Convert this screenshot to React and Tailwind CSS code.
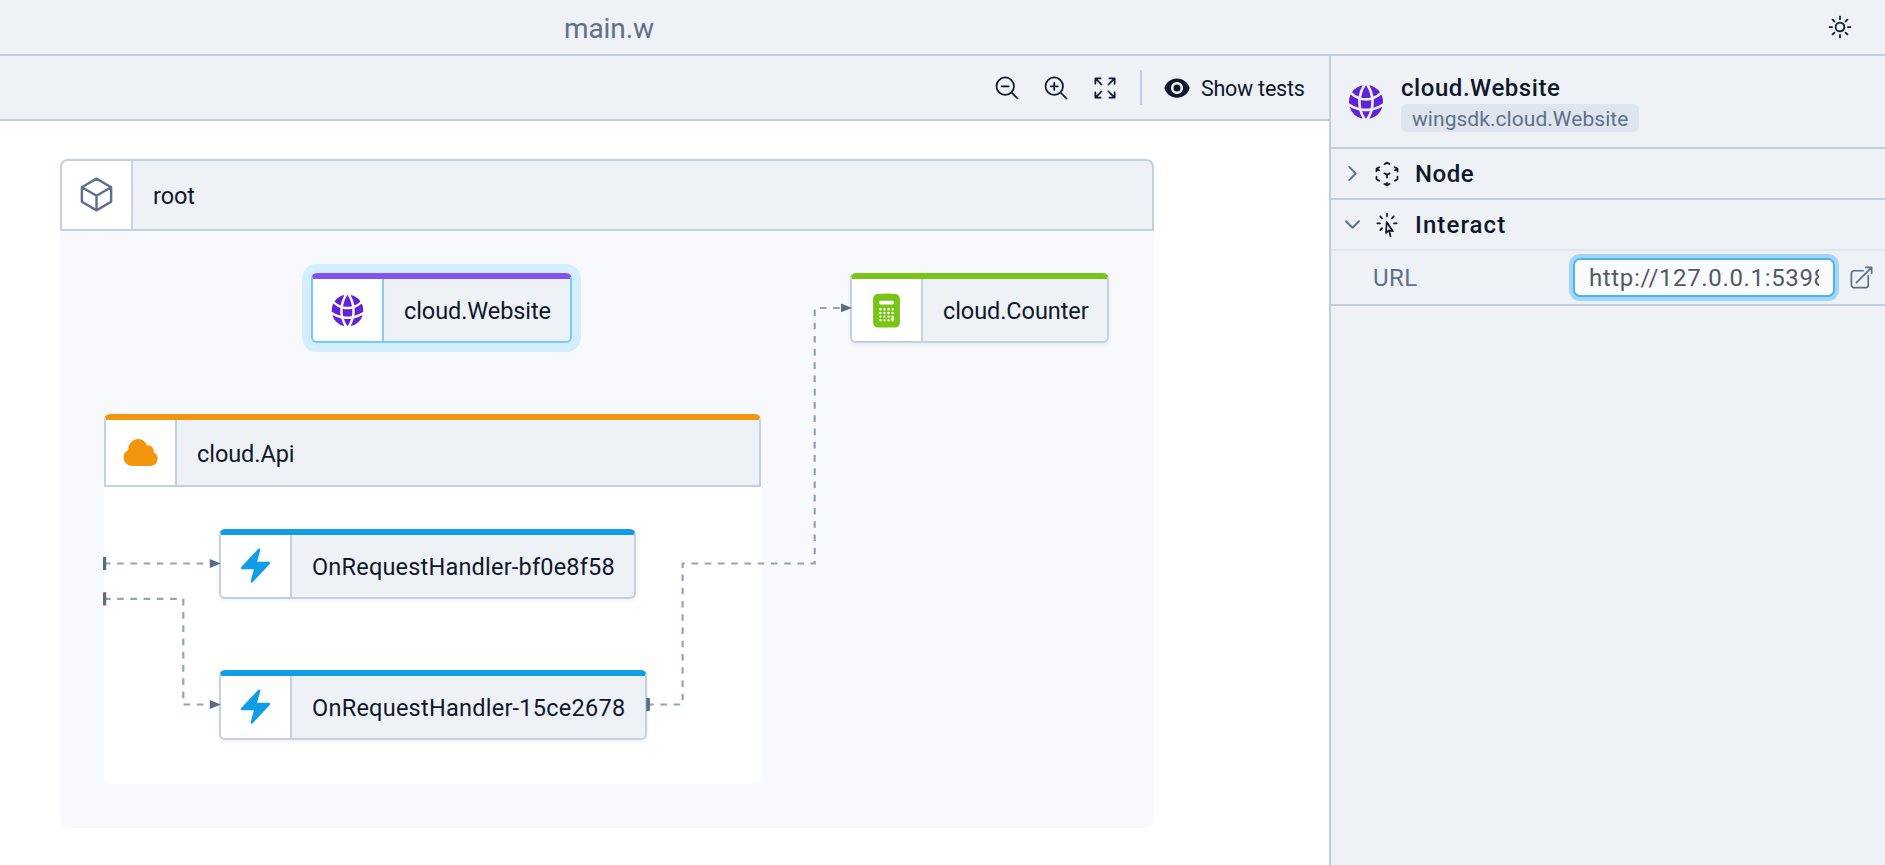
import {
  HiOutlineMagnifyingGlassMinus,
  HiOutlineMagnifyingGlassPlus,
  HiOutlineArrowsPointingOut,
  HiEye,
  HiOutlineSun,
  HiOutlineCube,
  HiGlobeAlt,
  HiCalculator,
  HiCloud,
  HiBolt,
  HiOutlineChevronRight,
  HiOutlineChevronDown,
  HiOutlineCubeTransparent,
  HiOutlineCursorArrowRays,
  HiOutlineArrowTopRightOnSquare,
} from "react-icons/hi2";

function Header() {
  return (
    <header className="flex h-14 shrink-0 items-center border-b-2 border-[#c1cddd] pl-[564px] pr-[31px]">
      <span className="pt-[3px] text-[28px] leading-8 tracking-[-0.1px] text-[#5f7089]">main.w</span>
      <HiOutlineSun className="ml-auto size-7 text-slate-900" />
    </header>
  );
}

function Toolbar() {
  return (
    <div className="flex h-[65px] shrink-0 items-center border-b-2 border-[#c1cddd] bg-[#eef1f6] pl-[993px] text-slate-900">
      <HiOutlineMagnifyingGlassMinus className="size-7" />
      <HiOutlineMagnifyingGlassPlus className="ml-[21px] size-7" />
      <HiOutlineArrowsPointingOut className="ml-[21px] size-7" />
      <div className="ml-[21px] h-[35px] w-0.5 bg-[#c1cddd]" />
      <HiEye className="ml-[21px] size-[28px]" />
      <span className="ml-[10px] whitespace-nowrap pt-0.5 text-[21.5px] leading-7 tracking-[-0.25px]">Show tests</span>
    </div>
  );
}

function NodeBox({ icon: Icon, iconClass, label, labelClass, className, lineClass }) {
  return (
    <div className={`absolute flex overflow-hidden bg-[#eef1f6] ${className}`}>
      <div className={`flex w-[71px] shrink-0 items-center justify-center border-r-2 bg-white ${lineClass}`}>
        <Icon className={`size-[39px] ${iconClass}`} />
      </div>
      <div className={`flex items-center whitespace-nowrap pl-5 pt-0.5 text-[23.5px] leading-8 text-slate-900 ${labelClass}`}>
        {label}
      </div>
    </div>
  );
}

function Connections() {
  return (
    <svg className="absolute left-0 top-0" width="1329" height="744" viewBox="0 121 1329 744" fill="none">
      <g stroke="#94a3b8" strokeWidth="2.2" strokeDasharray="6.62 6.62">
        <path d="M103.9 563.5H212" />
        <path d="M103.9 598.8H183.3V704.5H212" />
        <path d="M647.1 704.5H682.6V563.5H814.7V308H843" />
      </g>
      <g fill="#5b6b83">
        <path d="M103 556.9h3.2v13.2H103zM103 592.2h3.2v13.2H103zM646.3 697.9h3.6v13.2h-3.6z" />
        <path d="M209.8 559.1l11 4.4-11 4.4zM209.8 700.1l11 4.4-11 4.4zM841 303.5l11 4.4-11 4.4z" />
      </g>
    </svg>
  );
}

function Canvas() {
  return (
    <div className="relative flex-1 overflow-hidden bg-white">
      <div className="absolute left-[60px] top-[37px] h-[669.5px] w-[1094px] rounded-lg bg-[#f7f9fd]" />
      <NodeBox
        icon={HiOutlineCube}
        iconClass="text-[#5f7089]"
        label="root"
        labelClass="tracking-[-0.1px]"
        lineClass="border-[#c9d4e2]"
        className="left-[60px] top-[37.5px] h-[72.5px] w-[1094px] rounded-t-lg border-2 border-[#c4d0df]"
      />
      <NodeBox
        icon={HiGlobeAlt}
        iconClass="text-[#6322d8]"
        label="cloud.Website"
        labelClass="tracking-[-0.08px]"
        lineClass="border-[#7dd0fb]"
        className="left-[311px] top-[152px] h-[70px] w-[261px] rounded-md border-2 border-t-[6px] border-[#71ccfb] border-t-[#8152f6] shadow-[0_0_0_9px_#d5eefd]"
      />
      <NodeBox
        icon={HiCalculator}
        iconClass="text-[#79c516]"
        label="cloud.Counter"
        labelClass="tracking-[-0.08px]"
        lineClass="border-[#c4d0df]"
        className="left-[850px] top-[152px] h-[70px] w-[259px] rounded-md border-2 border-t-[6px] border-[#c4d0df] border-t-[#79c516] shadow-[0_2px_4px_rgba(0,0,0,0.06)]"
      />
      <div className="absolute left-[104px] top-[293px] h-[370px] w-[657.5px] rounded-lg bg-white" />
      <NodeBox
        icon={HiCloud}
        iconClass="text-[#f4950e]"
        label="cloud.Api"
        labelClass="tracking-[-0.07px]"
        lineClass="border-[#c4d0df]"
        className="left-[104px] top-[293px] h-[73px] w-[657px] rounded-t-md border-2 border-t-[6px] border-[#c4d0df] border-t-[#f4950e]"
      />
      <NodeBox
        icon={HiBolt}
        iconClass="text-[#119ce8]"
        label="OnRequestHandler-bf0e8f58"
        labelClass="tracking-[0.2px]"
        lineClass="border-[#c4d0df]"
        className="left-[219px] top-[407.5px] h-[70.5px] w-[417px] rounded-md border-2 border-t-[6px] border-[#c4d0df] border-t-[#119ce8] shadow-[0_2px_4px_rgba(0,0,0,0.06)]"
      />
      <NodeBox
        icon={HiBolt}
        iconClass="text-[#119ce8]"
        label="OnRequestHandler-15ce2678"
        labelClass="tracking-[0.25px]"
        lineClass="border-[#c4d0df]"
        className="left-[219px] top-[548.5px] h-[70.5px] w-[428px] rounded-md border-2 border-t-[6px] border-[#c4d0df] border-t-[#119ce8] shadow-[0_2px_4px_rgba(0,0,0,0.06)]"
      />
      <Connections />
    </div>
  );
}

function Inspector() {
  return (
    <aside className="flex w-[556px] shrink-0 flex-col border-l-2 border-[#c1cddd]">
      <div className="flex h-[93px] items-center border-b-2 border-[#c1cddd] pl-[14px]">
        <HiGlobeAlt className="size-[42px] shrink-0 text-[#6322d8]" />
        <div className="ml-[14px] flex flex-col items-start pt-px">
          <span className="text-[24px] font-medium leading-[30px] tracking-[0.55px] text-slate-900">cloud.Website</span>
          <span className="mt-px flex h-7 w-[238px] items-center whitespace-nowrap rounded-md bg-[#dee5ee] pl-[11px] pt-[3px] text-[21px] leading-6 tracking-[0.05px] text-[#5f7089]">
            wingsdk.cloud.Website
          </span>
        </div>
      </div>
      <div className="flex h-[51px] items-center border-b-2 border-[#c1cddd] pl-[11px]">
        <HiOutlineChevronRight strokeWidth={2.2} className="size-[21px] text-[#5f7089]" />
        <HiOutlineCubeTransparent className="ml-[10px] size-7 text-slate-900" />
        <span className="ml-[14px] text-[24px] font-medium tracking-[0.5px] text-slate-900">Node</span>
      </div>
      <div className="flex h-[51px] items-center border-b-2 border-[#dee5ee] pl-[11px]">
        <HiOutlineChevronDown strokeWidth={2.2} className="size-[21px] text-[#5f7089]" />
        <HiOutlineCursorArrowRays className="ml-[10px] size-7 text-slate-900" />
        <span className="ml-[14px] text-[24px] font-medium tracking-[1.1px] text-slate-900">Interact</span>
      </div>
      <div className="flex h-[55px] items-center border-b-2 border-[#c1cddd] pl-[42px]">
        <span className="w-[200px] text-[24px] tracking-[0.4px] text-[#5f7089]">URL</span>
        <input
          readOnly
          value="http://127.0.0.1:53982"
          className="h-[39px] w-[262px] rounded-[7px] border-2 border-[#4db5ec] bg-[#fafbfd] px-[14px] text-[24px] leading-8 tracking-[0.65px] text-[#535a66] shadow-[0_0_0_4px_#a2d6f2] outline-none"
        />
        <HiOutlineArrowTopRightOnSquare className="ml-[13px] size-[27px] text-[#5f7089]" />
      </div>
    </aside>
  );
}

export default function App() {
  return (
    <div className="flex h-[865px] w-[1885px] flex-col overflow-hidden bg-[#eef1f6] font-['Roboto',sans-serif]">
      <Header />
      <div className="flex min-h-0 flex-1">
        <main className="flex w-[1329px] shrink-0 flex-col">
          <Toolbar />
          <Canvas />
        </main>
        <Inspector />
      </div>
    </div>
  );
}
